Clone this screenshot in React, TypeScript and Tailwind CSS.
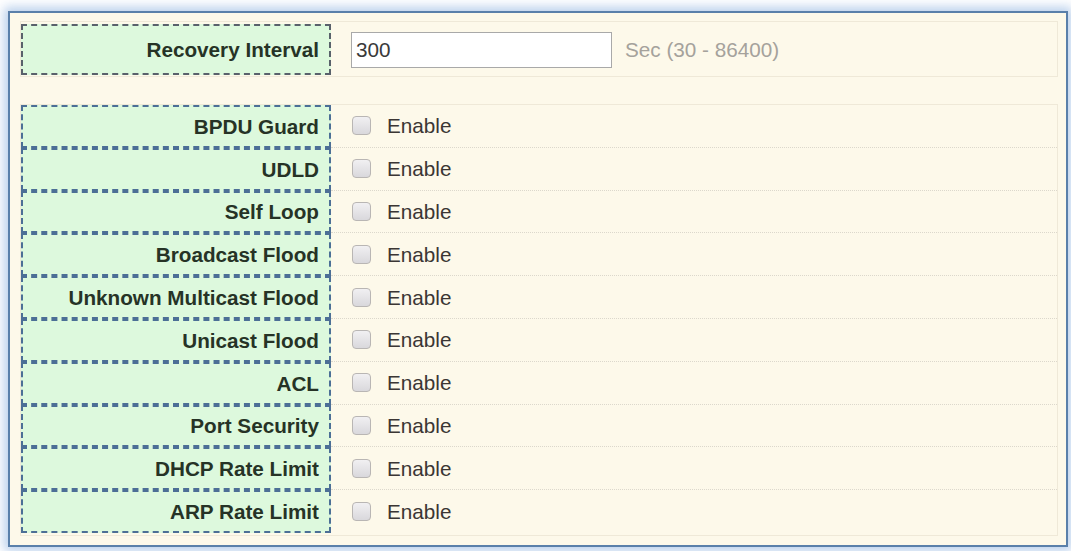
import React from "react";

const rows = [
  "BPDU Guard",
  "UDLD",
  "Self Loop",
  "Broadcast Flood",
  "Unknown Multicast Flood",
  "Unicast Flood",
  "ACL",
  "Port Security",
  "DHCP Rate Limit",
  "ARP Rate Limit",
];

function Check() {
  return (
    <span className="inline-block w-[19px] h-[19px] rounded-[4px] border border-[#b9b6b4] bg-gradient-to-b from-[#f1f0f2] to-[#d9d8dc]" />
  );
}

export default function App() {
  return (
    <div
      className="w-[1071px] h-[551px] bg-white pt-[11px] pl-[8px]"
      style={{ fontFamily: '"Liberation Sans", Arial, sans-serif' }}
    >
      <div className="w-[1060px] h-[536px] border-2 border-[#5a80aa] bg-[#fdf9ea] shadow-[0_0_10px_4px_rgba(130,170,220,0.55)] pt-[8px] px-[10px]">
        {/* recovery interval */}
        <div className="flex items-stretch border border-[#efe9d8] h-[56px] w-[1038px] pt-[2px]">
          <div className="w-[310px] h-[51px] border-2 border-dashed border-[#59616b] bg-[#ddf9dd] flex items-center justify-end pr-[10px] text-[20.7px] font-bold text-[#263326]">
            Recovery Interval
          </div>
          <div className="flex items-center pl-[20px] gap-[13px]">
            <div className="w-[261px] h-[36px] border border-[#a9a9a9] bg-white flex items-center pl-[4px] text-[20.7px] text-[#3a3a3a]">
              300
            </div>
            <span className="text-[20.7px] text-[#a5a29c]">Sec (30 - 86400)</span>
          </div>
        </div>

        {/* feature toggles */}
        <div className="mt-[27px] border border-[#efe9d8] w-[1038px] h-[432px]">
          {rows.map((r, i) => (
            <div key={r} className="flex items-stretch h-[42.8px]">
              <div className="w-[310px] border-2 border-dashed border-[#4c6f96] bg-[#ddf9dd] flex items-center justify-end pr-[10px] text-[20.7px] font-bold text-[#263326]">
                {r}
              </div>
              <div
                className={
                  "flex-1 flex items-center pl-[21px] gap-[16px] " +
                  (i < rows.length - 1 ? "border-b border-dotted border-[#dcd8cc]" : "")
                }
              >
                <Check />
                <span className="text-[20.7px] text-[#3b3634]">Enable</span>
              </div>
            </div>
          ))}
        </div>
      </div>
    </div>
  );
}
